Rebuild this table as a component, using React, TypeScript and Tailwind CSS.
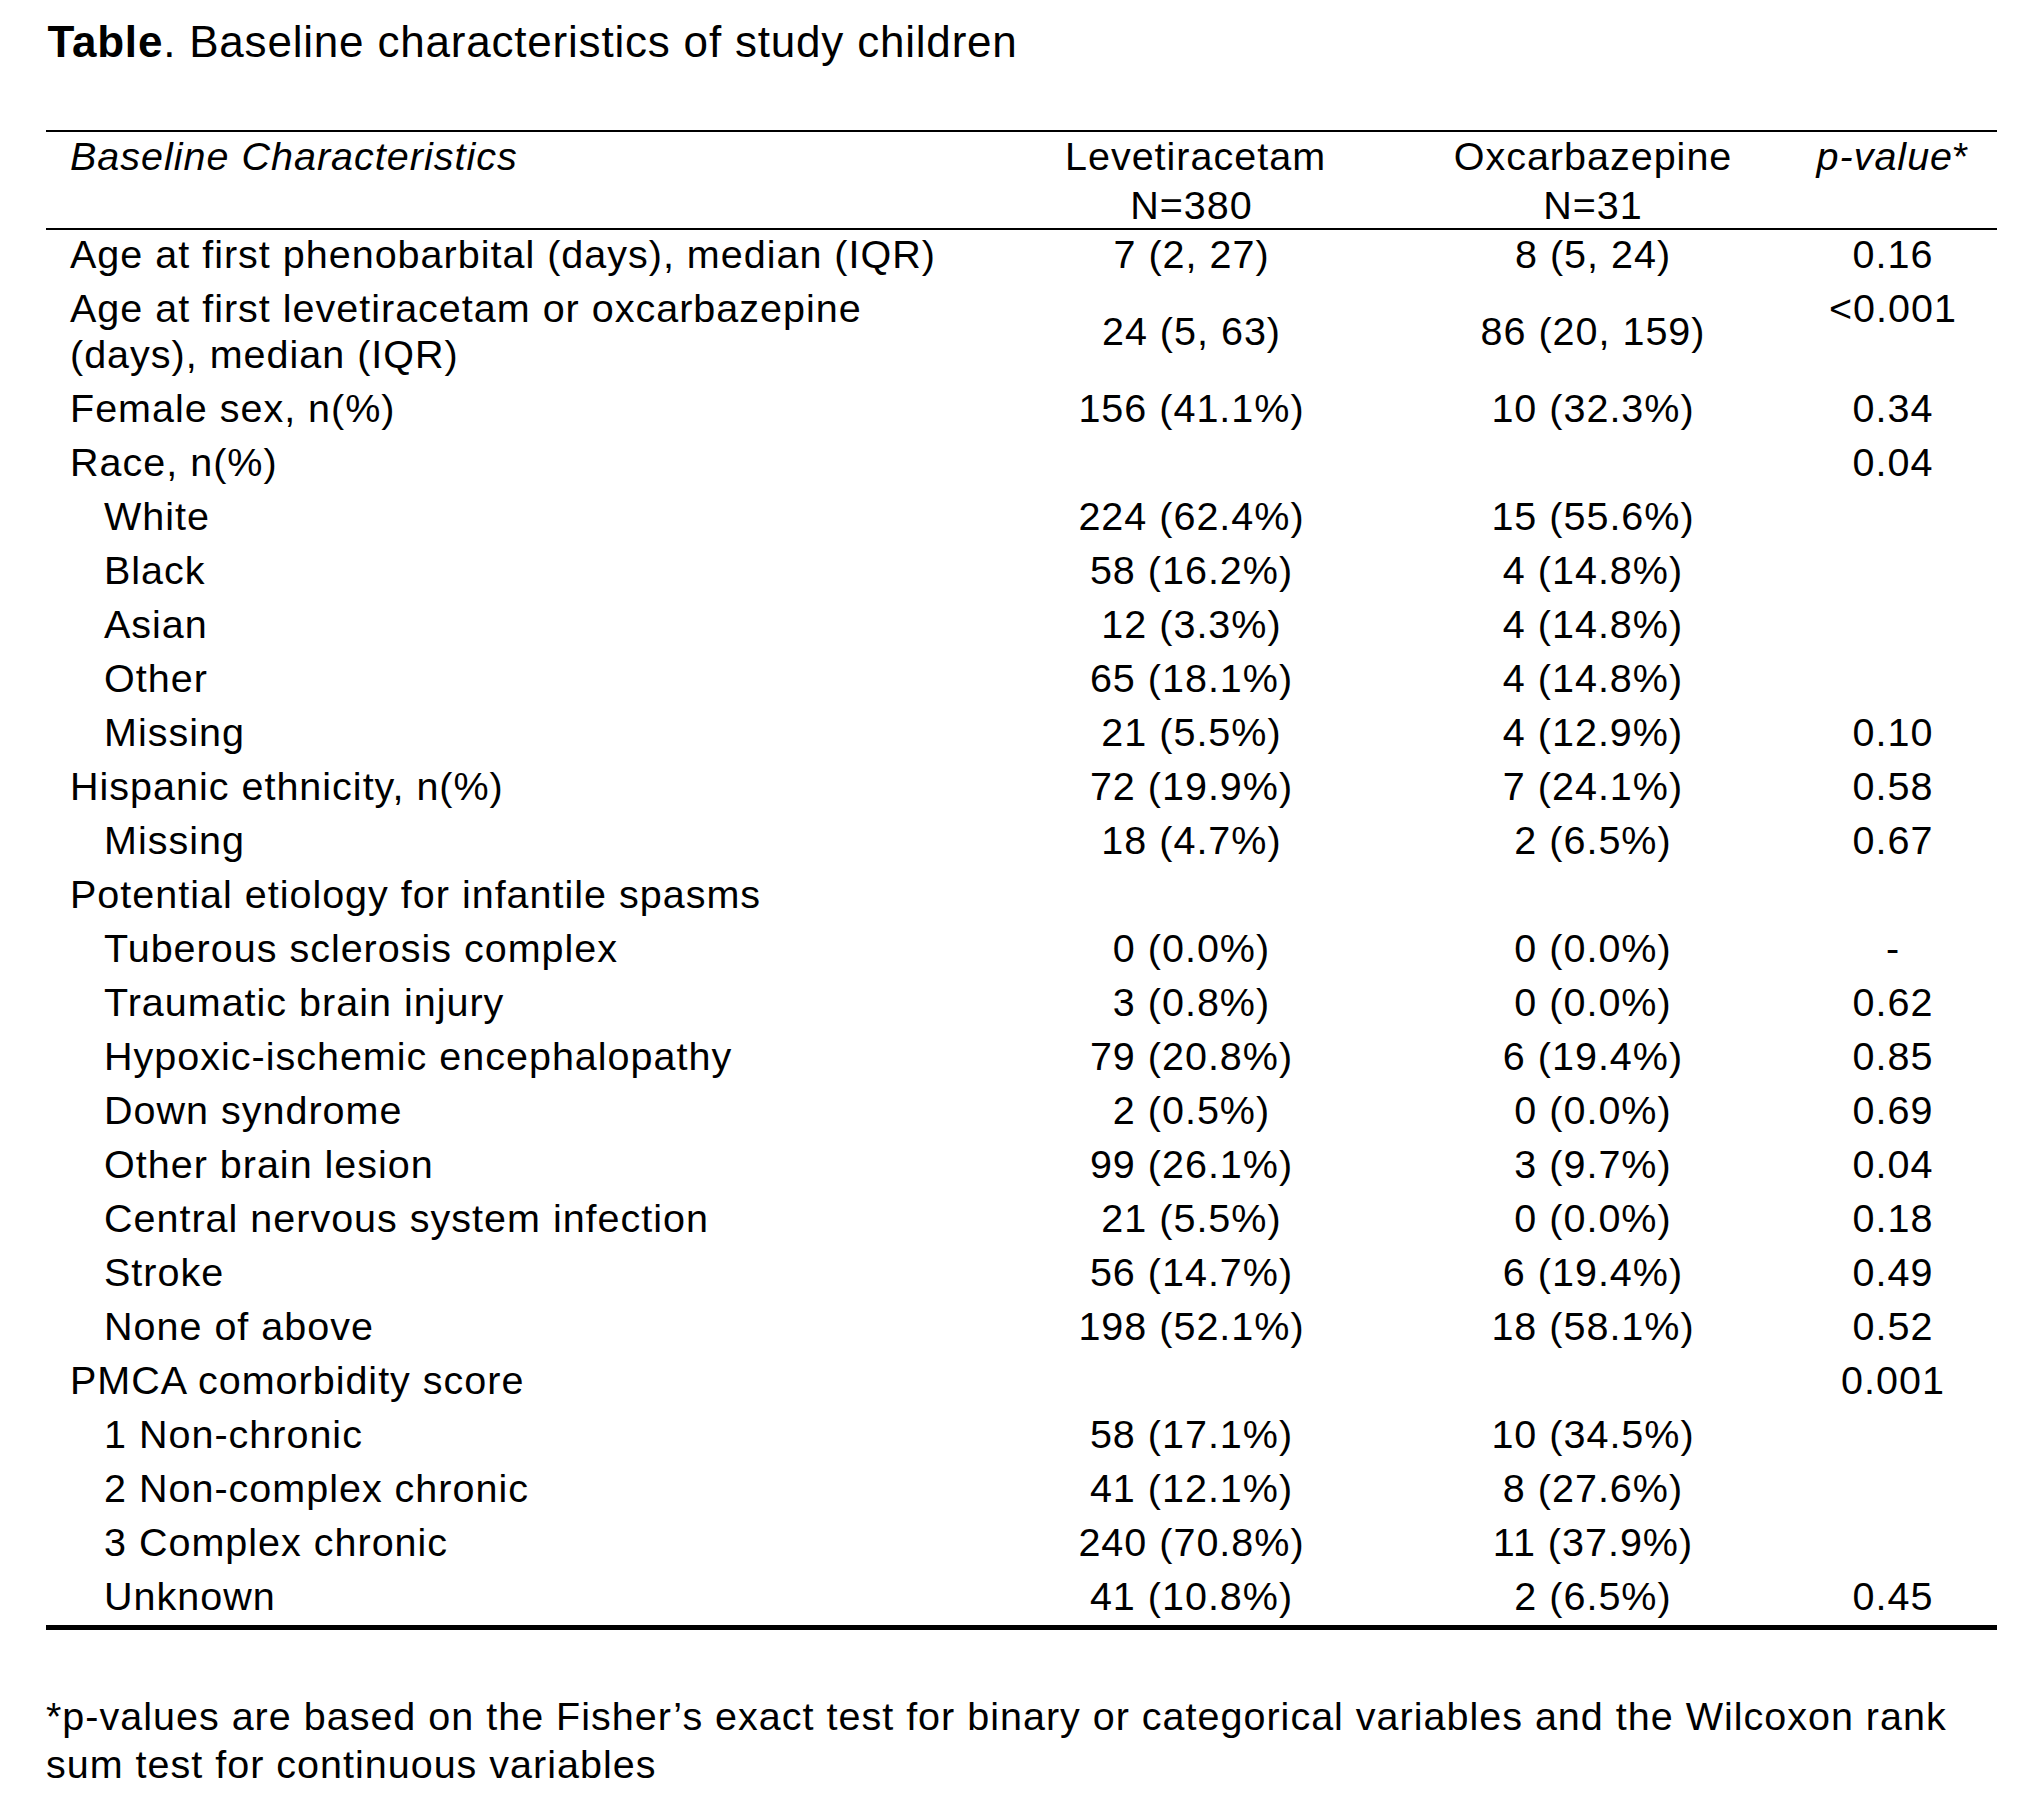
type Row = {
  label: React.ReactNode;
  indent?: boolean;
  lev: string;
  oxc: string;
  p: string;
};

const rows: Row[] = [
  { label: 'Age at first phenobarbital (days), median (IQR)', lev: '7 (2, 27)', oxc: '8 (5, 24)', p: '0.16' },
  {
    label: (
      <>
        Age at first levetiracetam or oxcarbazepine
        <br />
        (days), median (IQR)
      </>
    ),
    lev: '24 (5, 63)',
    oxc: '86 (20, 159)',
    p: '<0.001',
  },
  { label: 'Female sex, n(%)', lev: '156 (41.1%)', oxc: '10 (32.3%)', p: '0.34' },
  { label: 'Race, n(%)', lev: '', oxc: '', p: '0.04' },
  { label: 'White', indent: true, lev: '224 (62.4%)', oxc: '15 (55.6%)', p: '' },
  { label: 'Black', indent: true, lev: '58 (16.2%)', oxc: '4 (14.8%)', p: '' },
  { label: 'Asian', indent: true, lev: '12 (3.3%)', oxc: '4 (14.8%)', p: '' },
  { label: 'Other', indent: true, lev: '65 (18.1%)', oxc: '4 (14.8%)', p: '' },
  { label: 'Missing', indent: true, lev: '21 (5.5%)', oxc: '4 (12.9%)', p: '0.10' },
  { label: 'Hispanic ethnicity, n(%)', lev: '72 (19.9%)', oxc: '7 (24.1%)', p: '0.58' },
  { label: 'Missing', indent: true, lev: '18 (4.7%)', oxc: '2 (6.5%)', p: '0.67' },
  { label: 'Potential etiology for infantile spasms', lev: '', oxc: '', p: '' },
  { label: 'Tuberous sclerosis complex', indent: true, lev: '0 (0.0%)', oxc: '0 (0.0%)', p: '-' },
  { label: 'Traumatic brain injury', indent: true, lev: '3 (0.8%)', oxc: '0 (0.0%)', p: '0.62' },
  { label: 'Hypoxic-ischemic encephalopathy', indent: true, lev: '79 (20.8%)', oxc: '6 (19.4%)', p: '0.85' },
  { label: 'Down syndrome', indent: true, lev: '2 (0.5%)', oxc: '0 (0.0%)', p: '0.69' },
  { label: 'Other brain lesion', indent: true, lev: '99 (26.1%)', oxc: '3 (9.7%)', p: '0.04' },
  { label: 'Central nervous system infection', indent: true, lev: '21 (5.5%)', oxc: '0 (0.0%)', p: '0.18' },
  { label: 'Stroke', indent: true, lev: '56 (14.7%)', oxc: '6 (19.4%)', p: '0.49' },
  { label: 'None of above', indent: true, lev: '198 (52.1%)', oxc: '18 (58.1%)', p: '0.52' },
  { label: 'PMCA comorbidity score', lev: '', oxc: '', p: '0.001' },
  { label: '1 Non-chronic', indent: true, lev: '58 (17.1%)', oxc: '10 (34.5%)', p: '' },
  { label: '2 Non-complex chronic', indent: true, lev: '41 (12.1%)', oxc: '8 (27.6%)', p: '' },
  { label: '3 Complex chronic', indent: true, lev: '240 (70.8%)', oxc: '11 (37.9%)', p: '' },
  { label: 'Unknown', indent: true, lev: '41 (10.8%)', oxc: '2 (6.5%)', p: '0.45' },
];

const BodyRow = ({ row }: { row: Row }) => (
  <div className="flex">
    <div
      className={`w-[934px] pt-[2.3px] pb-[6.1px] ${row.indent ? 'pl-[58px]' : 'pl-[24px]'}`}
    >
      {row.label}
    </div>
    <div className="w-[415px] pl-[8px] pt-[2.3px] pb-[6.1px] flex items-center justify-center">
      {row.lev}
    </div>
    <div className="w-[394px] pl-[2px] pt-[2.3px] pb-[6.1px] flex items-center justify-center">
      {row.oxc}
    </div>
    <div className="w-[208px] pt-[2.3px] pb-[6.1px] text-center">{row.p}</div>
  </div>
);

export default function App() {
  return (
    <div className="bg-white text-black w-[2042px] min-h-[1805px] pl-[46px] pt-[16.5px] [font-family:Liberation_Sans,Arial,sans-serif]">
      <p className="ml-[1.5px] text-[44px] leading-[50px] tracking-[0.8px]">
        <span className="font-bold">Table</span>. Baseline characteristics of study children
      </p>

      <div className="mt-[63.5px] w-[1951px] text-[39.5px] leading-[45.6px] tracking-[1px]">
        {/* header */}
        <div className="flex h-[100px] border-t-2 border-b-2 border-black leading-[49px]">
          <div className="w-[934px] pl-[24px] italic">Baseline Characteristics</div>
          <div className="w-[415px] pl-[8px] text-center">
            <span className="pl-[8px]">Levetiracetam</span>
            <br />
            N=380
          </div>
          <div className="w-[394px] pl-[2px] text-center">
            Oxcarbazepine
            <br />
            N=31
          </div>
          <div className="w-[208px] text-center">
            <span className="italic">p-value</span>*
          </div>
        </div>

        {/* body */}
        <div className="border-b-[5px] border-black">
          {rows.map((row, i) => (
            <BodyRow key={i} row={row} />
          ))}
        </div>
      </div>

      <p className="mt-[62px] text-[39.5px] leading-[48px] tracking-[1px]">
        *p-values are based on the Fisher’s exact test for binary or categorical variables and the Wilcoxon rank
        <br />
        sum test for continuous variables
      </p>
    </div>
  );
}
